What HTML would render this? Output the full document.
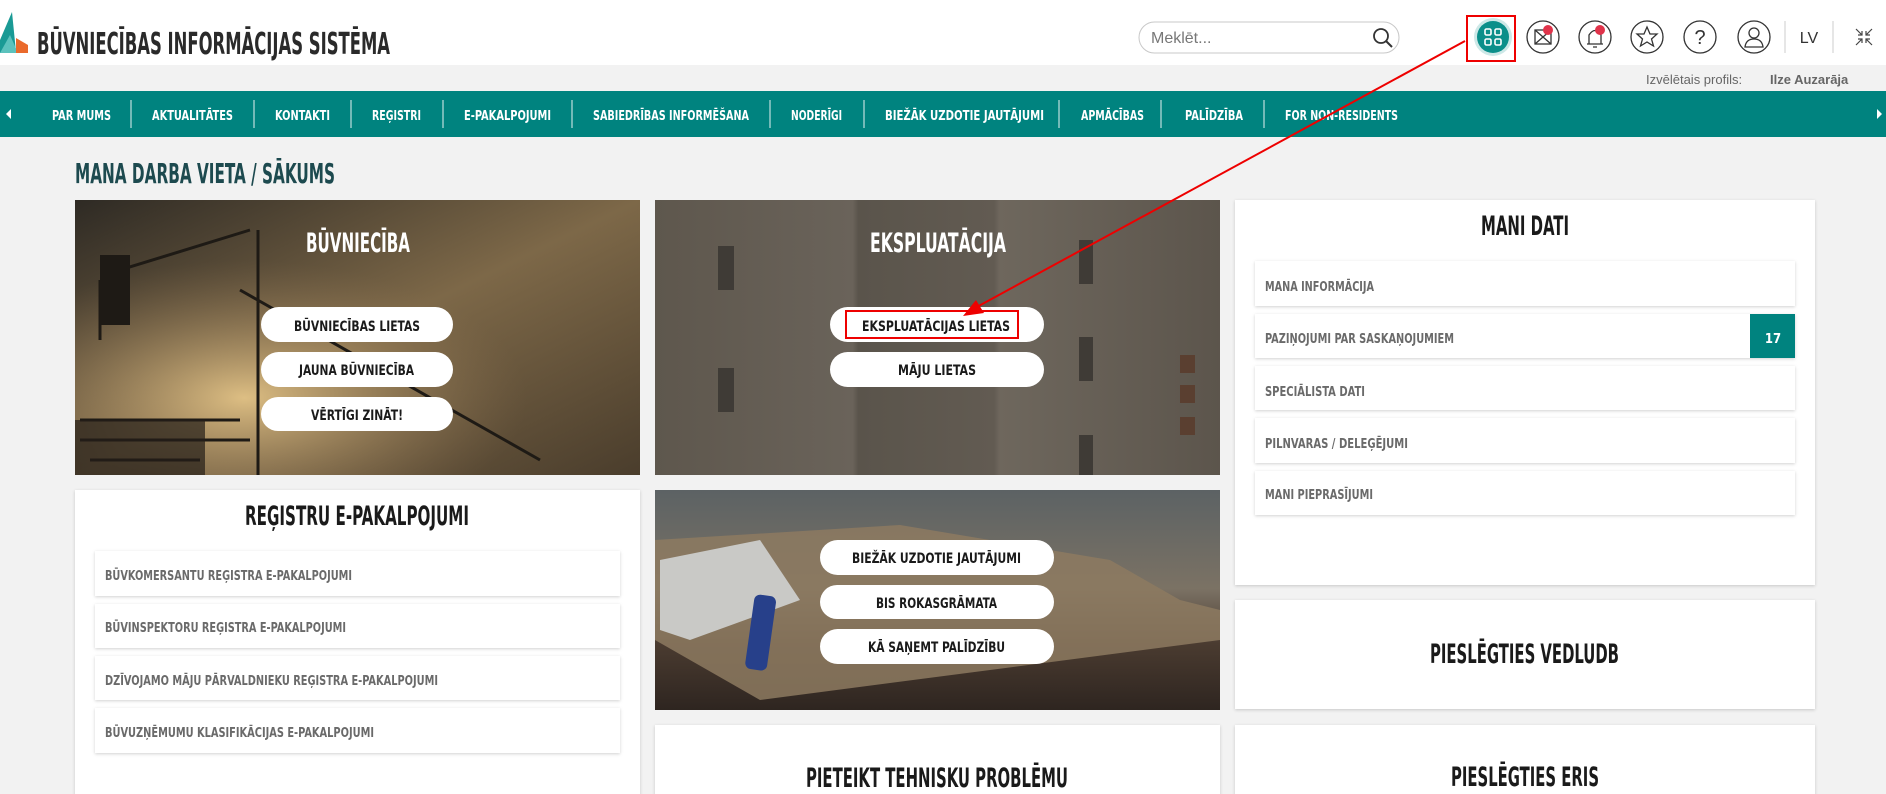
<!DOCTYPE html>
<html><head><meta charset="utf-8"><style>
html,body{margin:0;padding:0;width:1886px;height:794px;overflow:hidden;background:#f2f2f2}
svg{display:block}
text{font-family:"DejaVu Sans Condensed","DejaVu Sans","Liberation Sans",sans-serif;font-weight:bold}
.n{fill:#fff;font-size:13px}
.b{fill:#1a1a1a;font-size:14px}
.t{fill:#1a1a1a;font-size:27px}
.i{fill:#6a6a6a;font-size:13px}
</style></head><body>
<svg width="1886" height="794" viewBox="0 0 1886 794" xmlns="http://www.w3.org/2000/svg">
<defs>
<linearGradient id="g1" x1="0" y1="0" x2="1" y2="1"><stop offset="0" stop-color="#2e2a24"/><stop offset="0.5" stop-color="#7d6848"/><stop offset="1" stop-color="#4a3d2c"/></linearGradient>
<radialGradient id="sun" cx="0.3" cy="0.72" r="0.5"><stop offset="0" stop-color="#e8c88a" stop-opacity="0.9"/><stop offset="1" stop-color="#8a7050" stop-opacity="0"/></radialGradient>
<linearGradient id="g2" x1="0" y1="0" x2="1" y2="0"><stop offset="0" stop-color="#5e574d"/><stop offset="0.35" stop-color="#6a635a"/><stop offset="0.36" stop-color="#5a544b"/><stop offset="0.6" stop-color="#625b52"/><stop offset="0.61" stop-color="#6e675d"/><stop offset="1" stop-color="#5c554c"/></linearGradient>
<linearGradient id="g3" x1="0" y1="0" x2="0" y2="1"><stop offset="0" stop-color="#5c6264"/><stop offset="0.45" stop-color="#7b7264"/><stop offset="0.7" stop-color="#4a3b30"/><stop offset="1" stop-color="#2e2520"/></linearGradient>
<filter id="sh" x="-5%" y="-5%" width="110%" height="110%"><feDropShadow dx="0" dy="1" stdDeviation="1.5" flood-color="#000" flood-opacity="0.18"/></filter>
</defs>

<!-- header -->
<rect x="0" y="0" width="1886" height="65" fill="#fff"/>
<polygon points="0,40 12,12 16,52 0,53" fill="#1a9a95"/>
<polygon points="0,53 10,35 18,53" fill="#5cc2bd"/>
<polygon points="16,38 28,45 28,53 16,53" fill="#ea6a2c"/>
<text x="37" y="54" style="font-size:30px;fill:#2a2a2a" textLength="353" lengthAdjust="spacingAndGlyphs">BŪVNIECĪBAS INFORMĀCIJAS SISTĒMA</text>

<rect x="1139" y="22" width="260" height="31" rx="15.5" fill="#fff" stroke="#c8c8c8"/>
<text x="1151" y="43" style="font-family:'Liberation Sans',sans-serif;font-weight:normal;font-size:16px;fill:#777">Meklēt...</text>
<circle cx="1381" cy="36" r="7" fill="none" stroke="#333" stroke-width="1.8"/>
<line x1="1386" y1="41" x2="1392" y2="47" stroke="#333" stroke-width="2"/>

<!-- icons -->
<rect x="1467" y="16" width="48" height="45" fill="none" stroke="#e00" stroke-width="2"/>
<circle cx="1493" cy="37" r="19" fill="#cde8e7"/>
<circle cx="1493" cy="37" r="16" fill="#0b8f8a"/>
<g fill="none" stroke="#fff" stroke-width="1.6"><rect x="1485" y="29" width="6" height="6" rx="1.5"/><rect x="1495" y="29" width="6" height="6" rx="1.5"/><rect x="1485" y="39" width="6" height="6" rx="1.5"/><rect x="1495" y="39" width="6" height="6" rx="1.5"/></g>
<g fill="none" stroke="#333" stroke-width="1.3">
<circle cx="1543" cy="37" r="16"/><rect x="1535" y="30" width="16" height="14"/><path d="M1535 30 L1551 44 M1551 30 L1535 44"/>
<circle cx="1595" cy="37" r="16"/><path d="M1589 44 L1589 35 Q1595 26 1601 35 L1601 44 Z M1587 44 L1603 44 M1593 47 L1597 47"/>
<circle cx="1647" cy="37" r="16"/><path d="M1647 27 L1650 34 L1657 34 L1651.5 39 L1653.5 46 L1647 42 L1640.5 46 L1642.5 39 L1637 34 L1644 34 Z"/>
<circle cx="1700" cy="37" r="16"/>
<circle cx="1754" cy="37" r="16"/><circle cx="1754" cy="33" r="5"/><path d="M1745 47 Q1746 39 1754 39 Q1762 39 1763 47 Z"/>
</g>
<text x="1700" y="44" text-anchor="middle" style="font-family:'Liberation Sans',sans-serif;font-weight:normal;font-size:20px;fill:#333">?</text>
<circle cx="1548" cy="30" r="5" fill="#e0334a"/>
<circle cx="1600" cy="30" r="5" fill="#e0334a"/>
<line x1="1785" y1="21" x2="1785" y2="53" stroke="#ccc"/>
<text x="1809" y="43" text-anchor="middle" style="font-family:'Liberation Sans',sans-serif;font-weight:normal;font-size:16px;fill:#333">LV</text>
<line x1="1833" y1="21" x2="1833" y2="53" stroke="#ccc"/>
<g stroke="#444" stroke-width="1.2" fill="none"><path d="M1856 29 L1862 35 M1862 31 L1862 35 L1858 35 M1872 29 L1866 35 M1866 31 L1866 35 L1870 35 M1856 45 L1862 39 M1862 43 L1862 39 L1858 39 M1872 45 L1866 39 M1866 43 L1866 39 L1870 39"/></g>

<text x="1646" y="84" style="font-family:'Liberation Sans',sans-serif;font-weight:normal;font-size:13px;fill:#666">Izvēlētais profils:</text>
<text x="1770" y="84" style="font-family:'Liberation Sans',sans-serif;font-weight:bold;font-size:13px;fill:#666">Ilze Auzarāja</text>

<!-- nav -->
<rect x="0" y="91" width="1886" height="46" fill="#00837f"/>
<polygon points="6,114 11,109 11,119" fill="#fff"/>
<polygon points="1882,114 1877,109 1877,119" fill="#fff"/>
<g stroke="#fff" stroke-width="1" opacity="0.9"><line x1="131" y1="100" x2="131" y2="128"/><line x1="254" y1="100" x2="254" y2="128"/><line x1="351" y1="100" x2="351" y2="128"/><line x1="443" y1="100" x2="443" y2="128"/><line x1="572" y1="100" x2="572" y2="128"/><line x1="770" y1="100" x2="770" y2="128"/><line x1="864" y1="100" x2="864" y2="128"/><line x1="1059" y1="100" x2="1059" y2="128"/><line x1="1161" y1="100" x2="1161" y2="128"/><line x1="1264" y1="100" x2="1264" y2="128"/></g>
<text class="n" x="52" y="120" textLength="59" lengthAdjust="spacingAndGlyphs">PAR MUMS</text>
<text class="n" x="152" y="120" textLength="81" lengthAdjust="spacingAndGlyphs">AKTUALITĀTES</text>
<text class="n" x="275" y="120" textLength="55" lengthAdjust="spacingAndGlyphs">KONTAKTI</text>
<text class="n" x="372" y="120" textLength="49" lengthAdjust="spacingAndGlyphs">REĢISTRI</text>
<text class="n" x="464" y="120" textLength="87" lengthAdjust="spacingAndGlyphs">E-PAKALPOJUMI</text>
<text class="n" x="593" y="120" textLength="156" lengthAdjust="spacingAndGlyphs">SABIEDRĪBAS INFORMĒŠANA</text>
<text class="n" x="791" y="120" textLength="51" lengthAdjust="spacingAndGlyphs">NODERĪGI</text>
<text class="n" x="885" y="120" textLength="159" lengthAdjust="spacingAndGlyphs">BIEŽĀK UZDOTIE JAUTĀJUMI</text>
<text class="n" x="1081" y="120" textLength="63" lengthAdjust="spacingAndGlyphs">APMĀCĪBAS</text>
<text class="n" x="1185" y="120" textLength="58" lengthAdjust="spacingAndGlyphs">PALĪDZĪBA</text>
<text class="n" x="1285" y="120" textLength="113" lengthAdjust="spacingAndGlyphs">FOR NON-RESIDENTS</text>

<text x="75" y="183" style="font-size:28px;fill:#1d4a4f" textLength="260" lengthAdjust="spacingAndGlyphs">MANA DARBA VIETA / SĀKUMS</text>

<!-- card 1 -->
<rect x="75" y="200" width="565" height="275" fill="url(#g1)"/>
<rect x="75" y="200" width="565" height="275" fill="url(#sun)"/>
<g stroke="#1e1a15" stroke-width="3" fill="none"><path d="M258 230 L258 475 M240 290 L540 460 M120 270 L250 230 M100 280 L100 340 M80 420 L240 420 M80 440 L250 440 M90 460 L200 460"/></g>
<rect x="100" y="255" width="30" height="70" fill="#1e1a15"/>
<rect x="75" y="420" width="130" height="55" fill="#231e18" opacity="0.7"/>
<text x="306" y="252" class="t" style="fill:#fff" textLength="104" lengthAdjust="spacingAndGlyphs">BŪVNIECĪBA</text>
<rect x="261" y="307" width="192" height="35" rx="17.5" fill="#fff"/>
<rect x="261" y="352" width="192" height="35" rx="17.5" fill="#fff"/>
<rect x="261" y="397" width="192" height="34" rx="17" fill="#fff"/>
<text class="b" x="294" y="331" textLength="126" lengthAdjust="spacingAndGlyphs">BŪVNIECĪBAS LIETAS</text>
<text class="b" x="299" y="375" textLength="115" lengthAdjust="spacingAndGlyphs">JAUNA BŪVNIECĪBA</text>
<text class="b" x="311" y="420" textLength="92" lengthAdjust="spacingAndGlyphs">VĒRTĪGI ZINĀT!</text>

<!-- card 2 -->
<rect x="655" y="200" width="565" height="275" fill="url(#g2)"/>
<g fill="#3f3b36"><rect x="718" y="246" width="16" height="44"/><rect x="718" y="368" width="16" height="44"/><rect x="1079" y="240" width="14" height="44"/><rect x="1079" y="337" width="14" height="44"/><rect x="1079" y="435" width="14" height="40"/><rect x="1180" y="355" width="15" height="18" fill="#5a3f30"/><rect x="1180" y="385" width="15" height="18" fill="#5a3f30"/><rect x="1180" y="417" width="15" height="18" fill="#5a3f30"/></g>
<text x="870" y="252" class="t" style="fill:#fff" textLength="136" lengthAdjust="spacingAndGlyphs">EKSPLUATĀCIJA</text>
<rect x="830" y="307" width="214" height="35" rx="17.5" fill="#fff"/>
<rect x="830" y="352" width="214" height="35" rx="17.5" fill="#fff"/>
<text class="b" x="862" y="331" textLength="148" lengthAdjust="spacingAndGlyphs">EKSPLUATĀCIJAS LIETAS</text>
<text class="b" x="898" y="375" textLength="78" lengthAdjust="spacingAndGlyphs">MĀJU LIETAS</text>
<rect x="846" y="311" width="172" height="27" fill="none" stroke="#e00" stroke-width="2"/>

<!-- mani dati -->
<rect x="1235" y="200" width="580" height="385" fill="#fff" filter="url(#sh)"/>
<text x="1481" y="235" class="t" textLength="88" lengthAdjust="spacingAndGlyphs">MANI DATI</text>
<g fill="#fff" filter="url(#sh)"><rect x="1255" y="261" width="540" height="45"/><rect x="1255" y="314" width="540" height="44"/><rect x="1255" y="366" width="540" height="44"/><rect x="1255" y="418" width="540" height="45"/><rect x="1255" y="471" width="540" height="44"/></g>
<rect x="1750" y="314" width="45" height="44" fill="#00837f"/>
<text class="i" x="1265" y="291" textLength="109" lengthAdjust="spacingAndGlyphs">MANA INFORMĀCIJA</text>
<text class="i" x="1265" y="343" textLength="189" lengthAdjust="spacingAndGlyphs">PAZIŅOJUMI PAR SASKAŅOJUMIEM</text>
<text class="i" x="1265" y="396" textLength="100" lengthAdjust="spacingAndGlyphs">SPECIĀLISTA DATI</text>
<text class="i" x="1265" y="448" textLength="143" lengthAdjust="spacingAndGlyphs">PILNVARAS / DELEĢĒJUMI</text>
<text class="i" x="1265" y="499" textLength="108" lengthAdjust="spacingAndGlyphs">MANI PIEPRASĪJUMI</text>
<text x="1773" y="343" text-anchor="middle" style="font-size:13px;fill:#fff">17</text>

<!-- registru -->
<rect x="75" y="490" width="565" height="310" fill="#fff" filter="url(#sh)"/>
<text x="245" y="525" class="t" textLength="224" lengthAdjust="spacingAndGlyphs">REĢISTRU E-PAKALPOJUMI</text>
<g fill="#fff" filter="url(#sh)"><rect x="95" y="551" width="525" height="45"/><rect x="95" y="604" width="525" height="44"/><rect x="95" y="656" width="525" height="44"/><rect x="95" y="708" width="525" height="45"/></g>
<text class="i" x="105" y="580" textLength="247" lengthAdjust="spacingAndGlyphs">BŪVKOMERSANTU REĢISTRA E-PAKALPOJUMI</text>
<text class="i" x="105" y="632" textLength="241" lengthAdjust="spacingAndGlyphs">BŪVINSPEKTORU REĢISTRA E-PAKALPOJUMI</text>
<text class="i" x="105" y="685" textLength="333" lengthAdjust="spacingAndGlyphs">DZĪVOJAMO MĀJU PĀRVALDNIEKU REĢISTRA E-PAKALPOJUMI</text>
<text class="i" x="105" y="737" textLength="269" lengthAdjust="spacingAndGlyphs">BŪVUZŅĒMUMU KLASIFIKĀCIJAS E-PAKALPOJUMI</text>

<!-- help -->
<rect x="655" y="490" width="565" height="220" fill="url(#g3)"/>
<polygon points="655,540 900,525 1110,560 1180,600 1220,610 1220,640 760,700 655,640" fill="#8d7a60" opacity="0.85"/>
<polygon points="660,560 760,540 800,600 690,640 660,630" fill="#c9c9c6"/>
<rect x="750" y="595" width="22" height="75" rx="6" fill="#27408a" transform="rotate(8 760 630)"/>
<text x="852" y="252" style="display:none">.</text>
<rect x="820" y="540" width="234" height="35" rx="17.5" fill="#fff"/>
<rect x="820" y="585" width="234" height="34" rx="17" fill="#fff"/>
<rect x="820" y="629" width="234" height="35" rx="17.5" fill="#fff"/>
<text class="b" x="852" y="563" textLength="169" lengthAdjust="spacingAndGlyphs">BIEŽĀK UZDOTIE JAUTĀJUMI</text>
<text class="b" x="876" y="608" textLength="121" lengthAdjust="spacingAndGlyphs">BIS ROKASGRĀMATA</text>
<text class="b" x="868" y="652" textLength="137" lengthAdjust="spacingAndGlyphs">KĀ SAŅEMT PALĪDZĪBU</text>

<!-- vedludb -->
<rect x="1235" y="600" width="580" height="109" fill="#fff" filter="url(#sh)"/>
<text x="1430" y="663" class="t" textLength="189" lengthAdjust="spacingAndGlyphs">PIESLĒGTIES VEDLUDB</text>

<!-- bottom row -->
<rect x="655" y="725" width="565" height="80" fill="#fff" filter="url(#sh)"/>
<text x="806" y="787" class="t" textLength="262" lengthAdjust="spacingAndGlyphs">PIETEIKT TEHNISKU PROBLĒMU</text>
<rect x="1235" y="725" width="580" height="80" fill="#fff" filter="url(#sh)"/>
<text x="1451" y="786" class="t" textLength="148" lengthAdjust="spacingAndGlyphs">PIESLĒGTIES ERIS</text>

<!-- red arrow -->
<line x1="1465" y1="41" x2="975" y2="308" stroke="#e00" stroke-width="2"/>
<polygon points="963,316 976,300 984,313" fill="#e00"/>
</svg>
</body></html>
